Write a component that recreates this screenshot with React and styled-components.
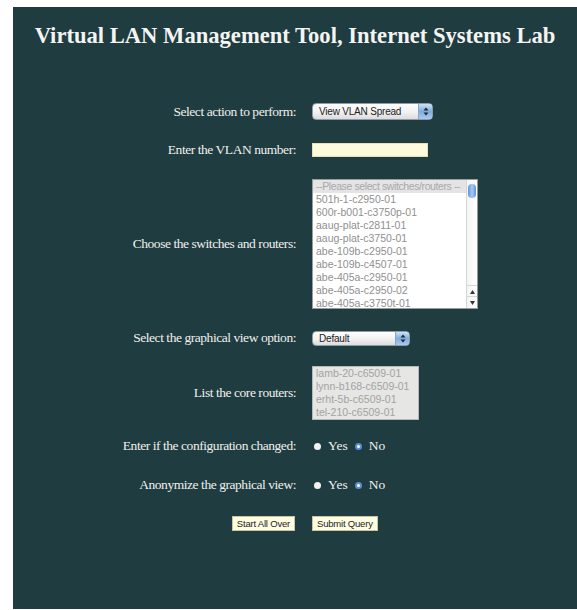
import React from "react";
import styled, { createGlobalStyle } from "styled-components";

const GlobalStyle = createGlobalStyle`
  html, body { margin: 0; padding: 0; background: #fff; }
`;

const Page = styled.div`
  padding: 7px 0 0 13px;
`;

const Panel = styled.div`
  height: 602px;
  background: #1f3c41;
  box-sizing: border-box;
  padding-top: 15px;
`;

const Title = styled.h1`
  margin: 0;
  text-align: center;
  font-family: "Liberation Serif", "DejaVu Serif", serif;
  font-weight: 700;
  font-size: 22.6px;
  line-height: 28px;
  color: #f4f4f2;
`;

const Form = styled.div`
  display: flex;
  flex-direction: column;
  padding-top: 53px;
`;

const Row = styled.div`
  display: grid;
  grid-template-columns: 283px auto;
  column-gap: 16px;
  align-items: center;
  margin-top: ${(p) => p.$space || 0}px;
`;

const Label = styled.div`
  text-align: right;
  font-family: "Liberation Serif", serif;
  font-size: 13.5px;
  line-height: 16px;
  letter-spacing: -0.45px;
  color: #f0f0ec;
`;

const Field = styled.div`
  display: flex;
  align-items: center;
`;

const Popup = styled.div`
  position: relative;
  width: ${(p) => p.$w}px;
  height: ${(p) => p.$h}px;
  box-sizing: border-box;
  border: 1px solid #8e9aa6;
  border-radius: 4px;
  background: linear-gradient(#ffffff, #f1f1f1 55%, #dcdcdc);
  display: flex;
  align-items: center;
  padding-left: 6px;
  font-family: "Liberation Sans", Arial, sans-serif;
  font-size: 10px;
  letter-spacing: -0.2px;
  color: #222;
  overflow: hidden;
`;

const PopupCap = styled.span`
  position: absolute;
  right: 0;
  top: 0;
  bottom: 0;
  width: 13px;
  background: linear-gradient(#cfe2f7, #7fadde 50%, #a9cbef);
  border-left: 1px solid #8aa4c4;
  display: flex;
  align-items: center;
  justify-content: center;
`;

const TextBox = styled.div`
  width: 116px;
  height: 14px;
  box-sizing: border-box;
  background: #fffadc;
  border: 1px solid #e6dfb8;
`;

const ListBox = styled.div`
  position: relative;
  width: ${(p) => p.$w}px;
  height: ${(p) => p.$h}px;
  box-sizing: border-box;
  border: 1px solid ${(p) => (p.$disabled ? "#b7b7b7" : "#9a9a9a")};
  background: ${(p) => (p.$disabled ? "#e6e6e4" : "#ffffff")};
  padding-right: ${(p) => (p.$scroll ? 11 : 0)}px;
  overflow: hidden;
  font-family: "Liberation Sans", Arial, sans-serif;
  font-size: 10.5px;
  color: ${(p) => (p.$disabled ? "#a3a3a3" : "#909090")};
`;

const Option = styled.div`
  height: 13px;
  line-height: 13px;
  padding-left: 3px;
  white-space: nowrap;
  background: ${(p) => (p.$head ? "#e4e4e4" : "transparent")};
  color: ${(p) => (p.$head ? "#a8a8a8" : "inherit")};
  letter-spacing: ${(p) => (p.$head ? "-0.4px" : "0")};
`;

const Scrollbar = styled.div`
  position: absolute;
  right: 0;
  top: 0;
  bottom: 0;
  width: 10px;
  border-left: 1px solid #d6d6d6;
  background: linear-gradient(90deg, #f4f4f4, #ffffff);
`;

const Thumb = styled.div`
  position: absolute;
  top: 4px;
  left: 1px;
  width: 8px;
  height: 14px;
  border-radius: 4px;
  background: linear-gradient(90deg, #5d92d6, #a8cbf2 50%, #5d92d6);
`;

const ScrollArrow = styled.div`
  position: absolute;
  left: 0;
  width: 10px;
  height: 11px;
  bottom: ${(p) => p.$bottom}px;
  border-top: 1px solid #d6d6d6;
  display: flex;
  align-items: center;
  justify-content: center;
`;

const RadioGroup = styled.div`
  display: flex;
  align-items: center;
  font-family: "Liberation Serif", serif;
  font-size: 13.5px;
  line-height: 16px;
  color: #f0f0ec;
  padding-left: 2px;
`;

const Dot = styled.span`
  width: 7px;
  height: 7px;
  border-radius: 50%;
  box-sizing: border-box;
  background: ${(p) => (p.$on ? "#ffffff" : "#f2f2f2")};
  border: ${(p) => (p.$on ? "2px solid #5b8fd6" : "none")};
  margin-right: 7px;
`;

const RadioText = styled.span`
  margin-right: 7px;
`;

const Button = styled.button`
  height: 15px;
  box-sizing: border-box;
  padding: 0 4px;
  border: 1px solid #c9c3a0;
  background: #fffde2;
  font-family: "Liberation Sans", Arial, sans-serif;
  font-size: 9.5px;
  line-height: 13px;
  color: #222;
  letter-spacing: -0.2px;
`;

const ButtonCell = styled.div`
  display: flex;
  justify-content: flex-end;
  padding-right: 1px;
`;

const Arrows = () => (
  <svg width="6" height="9" viewBox="0 0 6 9">
    <path d="M3 0.5 L5.5 3.5 L0.5 3.5 Z" fill="#1c2a3a" />
    <path d="M3 8.5 L5.5 5.5 L0.5 5.5 Z" fill="#1c2a3a" />
  </svg>
);

const Tri = ({ up }) => (
  <svg width="5" height="4" viewBox="0 0 5 4">
    <path d={up ? "M2.5 0 L5 4 L0 4 Z" : "M0 0 L5 0 L2.5 4 Z"} fill="#333" />
  </svg>
);

const Select = ({ value, w, h }) => (
  <Popup $w={w} $h={h}>
    {value}
    <PopupCap>
      <Arrows />
    </PopupCap>
  </Popup>
);

const Radios = ({ name }) => (
  <RadioGroup role="radiogroup" aria-label={name}>
    <Dot />
    <RadioText>Yes</RadioText>
    <Dot $on />
    <RadioText>No</RadioText>
  </RadioGroup>
);

const switches = [
  "501h-1-c2950-01",
  "600r-b001-c3750p-01",
  "aaug-plat-c2811-01",
  "aaug-plat-c3750-01",
  "abe-109b-c2950-01",
  "abe-109b-c4507-01",
  "abe-405a-c2950-01",
  "abe-405a-c2950-02",
  "abe-405a-c3750t-01",
];

const cores = [
  "lamb-20-c6509-01",
  "lynn-b168-c6509-01",
  "erht-5b-c6509-01",
  "tel-210-c6509-01",
];

export default function App() {
  return (
    <>
      <GlobalStyle />
      <Page>
        <Panel>
          <Title>Virtual LAN Management Tool, Internet Systems Lab</Title>
          <Form>
            <Row>
              <Label>Select action to perform:</Label>
              <Field>
                <Select value="View VLAN Spread" w={121} h={17} />
              </Field>
            </Row>
            <Row $space={22}>
              <Label>Enter the VLAN number:</Label>
              <Field>
                <TextBox />
              </Field>
            </Row>
            <Row $space={21}>
              <Label>Choose the switches and routers:</Label>
              <Field>
                <ListBox $w={166} $h={130} $scroll>
                  <Option $head>--Please select switches/routers --</Option>
                  {switches.map((s) => (
                    <Option key={s}>{s}</Option>
                  ))}
                  <Scrollbar>
                    <Thumb />
                    <ScrollArrow $bottom={11}>
                      <Tri up />
                    </ScrollArrow>
                    <ScrollArrow $bottom={0}>
                      <Tri />
                    </ScrollArrow>
                  </Scrollbar>
                </ListBox>
              </Field>
            </Row>
            <Row $space={21}>
              <Label>Select the graphical view option:</Label>
              <Field>
                <Select value="Default" w={98} h={15} />
              </Field>
            </Row>
            <Row $space={20}>
              <Label>List the core routers:</Label>
              <Field>
                <ListBox $w={107} $h={54} $disabled>
                  {cores.map((c) => (
                    <Option key={c}>{c}</Option>
                  ))}
                </ListBox>
              </Field>
            </Row>
            <Row $space={18}>
              <Label>Enter if the configuration changed:</Label>
              <Radios name="changed" />
            </Row>
            <Row $space={23}>
              <Label>Anonymize the graphical view:</Label>
              <Radios name="anonymize" />
            </Row>
            <Row $space={23}>
              <ButtonCell>
                <Button>Start All Over</Button>
              </ButtonCell>
              <Field>
                <Button>Submit Query</Button>
              </Field>
            </Row>
          </Form>
        </Panel>
      </Page>
    </>
  );
}
